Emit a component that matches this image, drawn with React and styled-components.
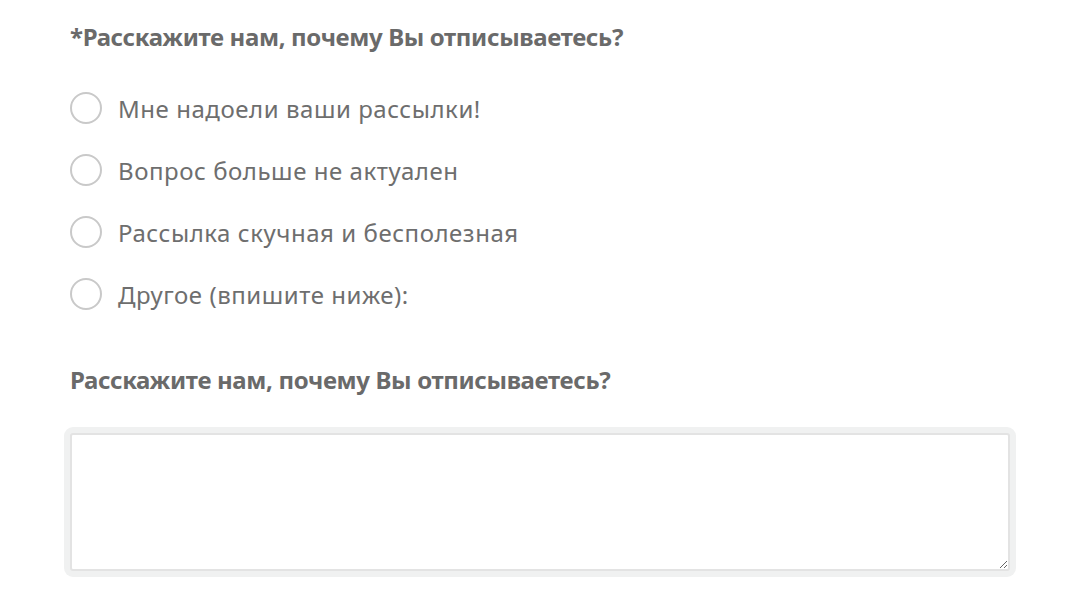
import React from "react";
import styled, { createGlobalStyle } from "styled-components";

const Global = createGlobalStyle`
  html, body { margin: 0; padding: 0; background: #ffffff; }
  body { font-family: "Noto Sans", "Open Sans", sans-serif; }
`;

const Form = styled.form`
  display: flex;
  flex-direction: column;
  padding: 20px 50px 0 64px;
  width: 952px;
`;

const Question = styled.div`
  padding-left: 6px;
  font-size: 24px;
  font-weight: 700;
  color: #6a6a6a;
  line-height: 34px;
  letter-spacing: -0.35px;
`;

const Options = styled.div`
  display: flex;
  flex-direction: column;
  gap: 30px;
  padding: 38px 0 0 6px;
`;

const Option = styled.label`
  display: flex;
  align-items: center;
  gap: 16px;
  height: 32px;
  font-size: 24px;
  color: #6e6e6e;
  letter-spacing: 0.55px;
  cursor: pointer;
`;

const Radio = styled.input.attrs({ type: "radio" })`
  appearance: none;
  margin: 0;
  width: 32px;
  height: 32px;
  border-radius: 50%;
  border: 2px solid #c9c9c9;
  box-sizing: border-box;
  background: #fff;
`;

const SecondQuestion = styled(Question)`
  margin-top: 53px;
`;

const Frame = styled.div`
  margin-top: 30px;
  border-radius: 9px;
  background: #f0f1f1;
  padding: 6px;
  display: flex;
`;

const Area = styled.textarea`
  flex: 1;
  height: 138px;
  margin: 0;
  border: 2px solid #e3e3e3;
  border-radius: 3px;
  background: #fff;
  box-sizing: border-box;
  resize: vertical;
  font-family: inherit;
  font-size: 18px;
  outline: none;
`;

const options = [
  "Мне надоели ваши рассылки!",
  "Вопрос больше не актуален",
  "Рассылка скучная и бесполезная",
  "Другое (впишите ниже):",
];

export default function App() {
  return (
    <>
      <Global />
      <Form>
        <Question>*Расскажите нам, почему Вы отписываетесь?</Question>
        <Options>
          {options.map((o) => (
            <Option key={o}>
              <Radio name="reason" value={o} />
              <span>{o}</span>
            </Option>
          ))}
        </Options>
        <SecondQuestion>Расскажите нам, почему Вы отписываетесь?</SecondQuestion>
        <Frame>
          <Area />
        </Frame>
      </Form>
    </>
  );
}
